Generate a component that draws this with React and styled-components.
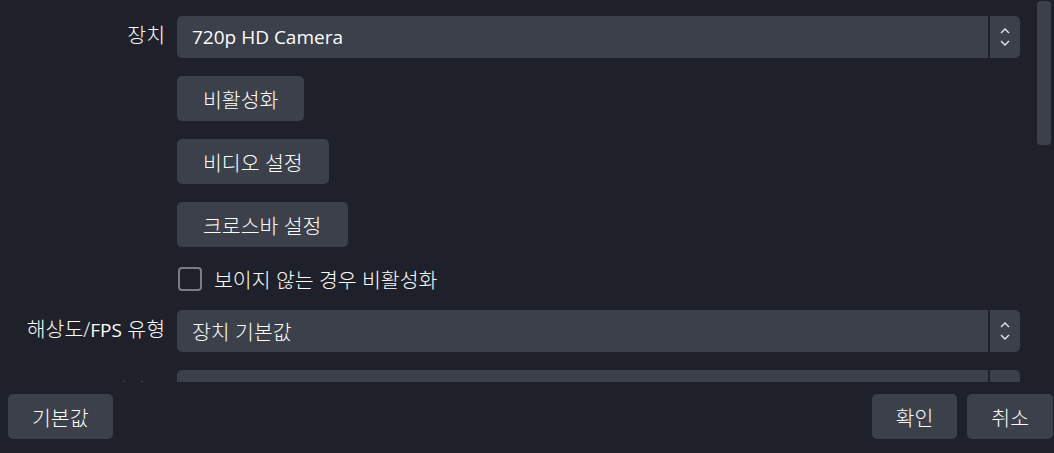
import React from 'react';
import styled, { createGlobalStyle } from 'styled-components';

const GlobalStyle = createGlobalStyle`
  html, body {
    margin: 0;
    padding: 0;
    background: #1f212a;
  }
  body {
    font-family: "Open Sans", "Noto Sans CJK KR", sans-serif;
    font-weight: 300;
    color: #fefefe;
  }
`;

const Window = styled.div`
  width: 1054px;
  height: 453px;
  display: flex;
  flex-direction: column;
  background: #1f212a;
  overflow: hidden;
`;

const ScrollArea = styled.div`
  height: 382px;
  display: flex;
  overflow: hidden;
`;

const Form = styled.div`
  flex: 1;
  display: grid;
  grid-template-columns: 165px 1fr;
  column-gap: 12px;
  row-gap: 18px;
  align-content: start;
  padding: 16px 14px 0 0;
`;

const Label = styled.div`
  text-align: right;
  font-size: 20.5px;
  line-height: 26px;
  align-self: center;
  white-space: nowrap;
  margin-top: ${(p) => (p.$lift ? '-4px' : '0')};
`;

const Latin = styled.span`
  font-size: 19px;
  font-weight: 400;
`;

const Field = styled.div`
  display: flex;
  align-items: center;
  min-width: 0;
`;

const Combo = styled.div`
  flex: 1;
  height: 42px;
  display: flex;
  background: #3c404b;
  border-radius: 5px;
  overflow: hidden;
`;

const ComboValue = styled.div`
  flex: 1;
  display: flex;
  align-items: center;
  padding-left: 15px;
  font-size: ${(p) => (p.$latin ? '19px' : '20.5px')};
  font-weight: ${(p) => (p.$latin ? 400 : 300)};
`;

const ComboArrow = styled.div`
  width: 30px;
  border-left: 2px solid #1f212a;
  display: flex;
  align-items: center;
  justify-content: center;
`;

const Button = styled.button`
  height: 45px;
  padding: 0 ${(p) => (p.$compact ? '24px' : '26px')};
  border: none;
  border-radius: 5px;
  background: #3c404b;
  color: #fefefe;
  font-family: inherit;
  font-weight: 300;
  font-size: 20.5px;
  white-space: nowrap;
  cursor: pointer;
`;

const CheckRow = styled.label`
  height: 27px;
  display: flex;
  align-items: center;
  gap: 12px;
  font-size: 20.5px;
`;

const Box = styled.span`
  width: 20px;
  height: 20px;
  margin-left: 1px;
  border: 2px solid #7b7d84;
  border-radius: 4px;
`;

const Track = styled.div`
  width: 20px;
  padding: 1px 3px 0 3px;
  box-sizing: border-box;
`;

const Handle = styled.div`
  width: 14px;
  height: 144px;
  border-radius: 4px;
  background: #3c404b;
`;

const Footer = styled.div`
  display: flex;
  justify-content: space-between;
  padding: 12px 1px 0 8px;
`;

const ButtonGroup = styled.div`
  display: flex;
  gap: 10px;
`;

const Chevrons = () => (
  <svg width="10" height="18" viewBox="0 0 10 18" fill="none" stroke="#e6e6e6" strokeWidth="1.4">
    <polyline points="1,5 5,1 9,5" />
    <polyline points="1,13 5,17 9,13" />
  </svg>
);

const Select = ({ value, latin }) => (
  <Combo>
    <ComboValue $latin={latin}>{value}</ComboValue>
    <ComboArrow>
      <Chevrons />
    </ComboArrow>
  </Combo>
);

const Blank = () => <div />;

export default function App() {
  return (
    <>
      <GlobalStyle />
      <Window>
        <ScrollArea>
          <Form>
            <Label $lift>장치</Label>
            <Field>
              <Select value="720p HD Camera" latin />
            </Field>

            <Blank />
            <Field>
              <Button>비활성화</Button>
            </Field>

            <Blank />
            <Field>
              <Button>비디오 설정</Button>
            </Field>

            <Blank />
            <Field>
              <Button>크로스바 설정</Button>
            </Field>

            <Blank />
            <CheckRow>
              <Box />
              보이지 않는 경우 비활성화
            </CheckRow>

            <Label $lift>
              해상도/<Latin>FPS</Latin> 유형
            </Label>
            <Field>
              <Select value="장치 기본값" />
            </Field>

            <Label>해상도</Label>
            <Field>
              <Select value="" />
            </Field>
          </Form>
          <Track>
            <Handle />
          </Track>
        </ScrollArea>
        <Footer>
          <Button $compact>기본값</Button>
          <ButtonGroup>
            <Button $compact>확인</Button>
            <Button $compact>취소</Button>
          </ButtonGroup>
        </Footer>
      </Window>
    </>
  );
}
